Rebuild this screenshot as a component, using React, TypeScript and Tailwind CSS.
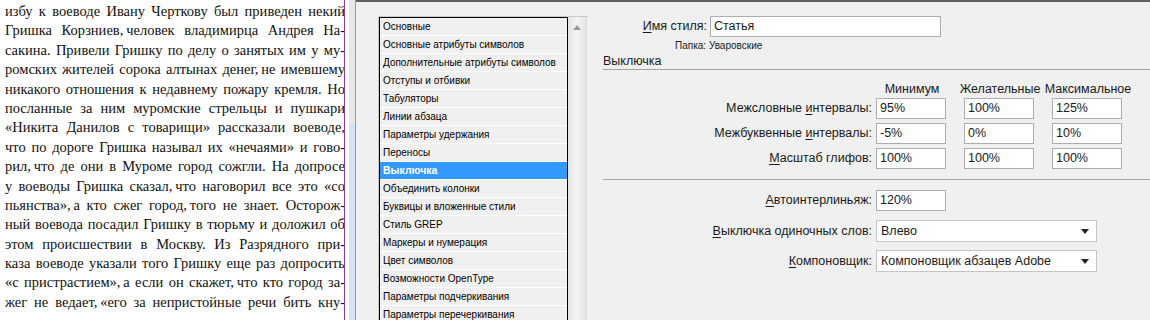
import React from 'react'

const pageLines = [
  'избу к воеводе Ивану Черткову был приведен некий',
  'Гришка Корзниев,\u2009человек владимирца Андрея На-',
  'сакина. Привели Гришку по делу о занятых им у му-',
  'ромских жителей сорока алтынах денег,\u2009не имевшему',
  'никакого отношения к недавнему пожару кремля. Но',
  'посланные за ним муромские стрельцы и пушкари',
  '«Никита Данилов с товарищи» рассказали воеводе,',
  'что по дороге Гришка называл их «нечаями» и гово-',
  'рил,\u2009что де они в Муроме город сожгли. На допросе',
  'у воеводы Гришка сказал,\u2009что наговорил все это «со',
  'пьянства»,\u2009а кто сжег город,\u2009того не знает. Осторож-',
  'ный воевода посадил Гришку в тюрьму и доложил об',
  'этом происшествии в Москву. Из Разрядного при-',
  'каза воеводе указали того Гришку еще раз допросить',
  '«с пристрастием»,\u2009а если он скажет,\u2009что кто город за-',
  'жег не ведает,\u2009«его за непристойные речи бить кну-',
]

const sections = [
  'Основные',
  'Основные атрибуты символов',
  'Дополнительные атрибуты символов',
  'Отступы и отбивки',
  'Табуляторы',
  'Линии абзаца',
  'Параметры удержания',
  'Переносы',
  'Выключка',
  'Объединить колонки',
  'Буквицы и вложенные стили',
  'Стиль GREP',
  'Маркеры и нумерация',
  'Цвет символов',
  'Возможности OpenType',
  'Параметры подчеркивания',
  'Параметры перечеркивания',
]

const spacingRows = [
  { before: 'Межсловные ', key: 'и', after: 'нтервалы:', values: ['95%', '100%', '125%'] },
  { before: 'Межбуквенные ', key: 'и', after: 'нтервалы:', values: ['-5%', '0%', '10%'] },
  { before: '', key: 'М', after: 'асштаб глифов:', values: ['100%', '100%', '100%'] },
]

function Label({ before = '', k, after }: { before?: string; k: string; after: string }) {
  return (
    <span>
      {before}
      <span className="underline underline-offset-2">{k}</span>
      {after}
    </span>
  )
}

function Field({ value, className = 'w-[70px]' }: { value: string; className?: string }) {
  return (
    <div className={`${className} h-[21px] bg-white border border-[#abadb3] pl-[3px] leading-[19px] text-[#1a1a1a]`}>
      {value}
    </div>
  )
}

function Select({ value }: { value: string }) {
  return (
    <div className="w-[221px] h-[22px] bg-white border border-[#c5c5c5] pl-[4px] pr-[7px] flex items-center justify-between text-[#1a1a1a]">
      <span>{value}</span>
      <svg width="8" height="5" viewBox="0 0 8 5">
        <path d="M0 0 L8 0 L4 5 Z" fill="#222" />
      </svg>
    </div>
  )
}

export default function App() {
  return (
    <div className="w-[1150px] h-[320px] flex overflow-hidden bg-white">
      {/* text page */}
      <div className="w-[344px] shrink-0 bg-white pl-[5px] pt-[2px] font-['Liberation_Serif',serif] text-[14.5px] text-[#111]">
        {pageLines.map((line) => (
          <div
            key={line}
            className="w-[340px] h-[19.4px] leading-[19.4px] whitespace-nowrap text-justify [text-align-last:justify]"
          >
            {line}
          </div>
        ))}
      </div>
      <div className="w-px shrink-0 bg-[#8b3fa3]" />
      <div className="w-[4px] shrink-0 bg-white" />
      <div className="w-[6px] shrink-0 flex flex-col">
        <div className="h-[125px] bg-[#e6e6e6]" />
        <div className="flex-1 bg-[#d3e3f4]" />
      </div>
      <div className="w-px shrink-0 bg-[#9a9a9a]" />

      {/* dialog */}
      <div className="flex-1 flex bg-[#f0f0f0] border-t-2 border-[#5f5f5f] font-['Liberation_Sans',sans-serif] text-[12.5px] text-[#1a1a1a]">
        {/* section list */}
        <div className="ml-[22px] mt-[14px] w-[210px] shrink-0 self-start flex border-l border-t border-[#c9c9c9]">
          <div className="w-[189px] border-l border-t border-r border-black text-[10px]">
            {sections.map((s, i) => (
              <div
                key={s}
                className={
                  i === 8
                    ? 'h-[18px] leading-[17px] pl-[3px] border-b border-white whitespace-nowrap bg-[#3399ff] text-white font-bold text-[10.5px]'
                    : 'h-[18px] leading-[17px] pl-[3px] border-b border-white whitespace-nowrap text-black'
                }
              >
                {s}
              </div>
            ))}
          </div>
          <div className="w-[19px] h-[310px] bg-gradient-to-r from-[#e4e4e4] via-[#f4f4f4] to-[#e4e4e4] border-r border-[#dcdcdc] flex justify-center pt-[8px]">
            <svg width="8" height="5" viewBox="0 0 8 5">
              <path d="M0 5 L8 5 L4 0 Z" fill="#9a9a9a" />
            </svg>
          </div>
        </div>

        {/* form */}
        <div className="ml-[15px] flex-1 flex flex-col">
          <div className="mt-[14px] h-[21px] flex items-center">
            <div className="w-[104px] text-right">
              <Label k="И" after="мя стиля:" />
            </div>
            <Field value="Статья" className="ml-[3px] w-[231px]" />
          </div>
          <div className="h-[18px] leading-[18px] pl-[72px] text-[10px]">Папка: Уваровские</div>
          <div className="h-[15px] leading-[13px] border-b border-[#a5a5a5]">Выключка</div>

          <div className="mt-[11px] h-[16px] flex items-center">
            <div className="w-[274px]" />
            <div className="w-[70px] text-center">Минимум</div>
            <div className="ml-[18px] w-[70px] flex justify-center whitespace-nowrap">Желательные</div>
            <div className="ml-[18px] w-[70px] flex justify-center whitespace-nowrap">Максимальное</div>
          </div>

          <div className="mt-[1px] flex flex-col gap-[4px]">
            {spacingRows.map((r) => (
              <div key={r.before + r.after} className="h-[21px] flex items-center">
                <div className="w-[270px] text-right pr-[1px]">
                  <Label before={r.before} k={r.key} after={r.after} />
                </div>
                <div className="ml-[3px] flex gap-[18px]">
                  {r.values.map((v, i) => (
                    <Field key={i} value={v} />
                  ))}
                </div>
              </div>
            ))}
          </div>

          <div className="mt-[10px] border-t border-[#a5a5a5]" />

          <div className="mt-[10px] h-[21px] flex items-center">
            <div className="w-[270px] text-right pr-[1px]">
              <Label k="А" after="втоинтерлиньяж:" />
            </div>
            <Field value="120%" className="ml-[3px] w-[70px]" />
          </div>
          <div className="mt-[9px] h-[22px] flex items-center">
            <div className="w-[270px] text-right pr-[1px]">
              <Label k="В" after="ыключка одиночных слов:" />
            </div>
            <div className="ml-[3px]">
              <Select value="Влево" />
            </div>
          </div>
          <div className="mt-[8px] h-[22px] flex items-center">
            <div className="w-[270px] text-right pr-[1px]">
              <Label k="К" after="омпоновщик:" />
            </div>
            <div className="ml-[3px]">
              <Select value="Компоновщик абзацев Adobe" />
            </div>
          </div>
        </div>
      </div>
    </div>
  )
}
